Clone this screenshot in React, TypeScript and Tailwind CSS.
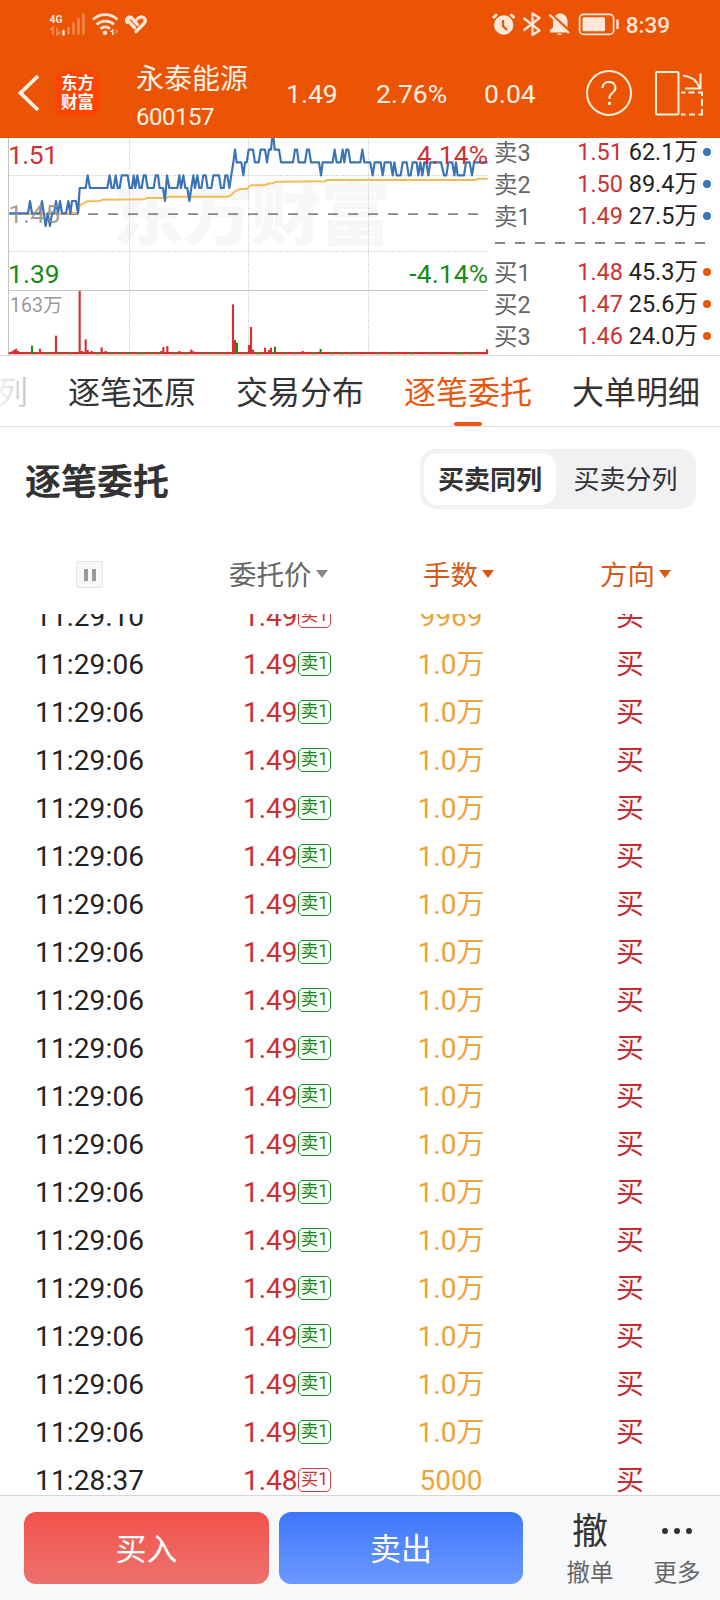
import React from "react";

const LEVELS: Record<string, number> = {
  "-1": 273, "0": 235, "1": 198, "2": 159, "3": 121, "4": 82, "5": 44, "6": 12,
};

// Alternating x position and price level of the intraday line.
const PRICE = [
  28, 0, 84, 0, 90, 1, 96, 0, 120, 0, 126, 1, 137, -1, 143, 0, 150, -1, 156, 0, 162, 0, 168, 1, 174, 0, 180, 1, 186, 0, 198, 0,
  205, 1, 211, 0, 216, 1, 228, 1, 234, 0, 239, 2, 257, 2, 263, 3, 270, 2, 322, 2, 329, 3, 335, 2, 341, 2, 347, 3, 353, 2, 359, 2,
  365, 3, 383, 3, 389, 2, 396, 2, 401, 3, 406, 2, 412, 3, 419, 2, 425, 2, 431, 3, 437, 3, 443, 2, 461, 2, 467, 3, 474, 3, 479, 2,
  489, 2, 495, 1, 501, 3, 508, 2, 532, 2, 538, 3, 543, 2, 550, 3, 556, 2, 562, 2, 568, 1, 574, 2, 580, 3, 585, 2, 592, 3, 598, 2,
  604, 2, 610, 3, 617, 3, 623, 2, 634, 2, 640, 3, 657, 3, 663, 2, 671, 2, 676, 3, 682, 3, 688, 2, 700, 4, 705, 5, 710, 4, 724, 4,
  730, 3, 735, 4, 740, 4, 746, 5, 759, 5, 765, 4, 776, 4, 782, 5, 795, 5, 801, 4, 807, 5, 813, 5, 816, 6, 821, 6, 824, 5, 837, 5, 843, 4,
  879, 4, 885, 5, 891, 5, 896, 4, 915, 4, 921, 5, 927, 5, 933, 4, 957, 4, 963, 3, 968, 4, 998, 4, 1004, 5, 1010, 4, 1022, 4,
  1028, 5, 1033, 4, 1039, 5, 1045, 5, 1051, 4, 1081, 4, 1087, 5, 1093, 4, 1111, 4, 1118, 3, 1124, 4, 1142, 4, 1148, 3, 1154, 4,
  1172, 4, 1178, 3, 1183, 4, 1190, 3, 1202, 3, 1208, 4, 1220, 4, 1226, 3, 1232, 3, 1238, 4, 1250, 4, 1255, 3, 1261, 4, 1267, 3,
  1273, 4, 1279, 4, 1285, 3, 1291, 4, 1323, 4, 1332, 3, 1339, 3, 1345, 4, 1357, 4, 1363, 3, 1368, 4, 1373, 3, 1392, 3, 1398, 4,
  1409, 4, 1416, 3, 1422, 4, 1463, 4,
];

const AVERAGE =
  "28,237 205,237 210,233 234,233 240,210 250,205 262,199 300,198 305,194 435,193 440,189 500,189 505,185 680,185 692,182 705,168 720,162 740,162 753,151 793,151 803,147 815,145 830,140 975,139 981,135 1427,135 1435,131 1463,131";

const points: string[] = [];
for (let i = 0; i < PRICE.length; i += 2) points.push(`${PRICE[i]},${LEVELS[String(PRICE[i + 1])]}`);

// x, top edge, falling
const VOLUME: [number, number, boolean?][] = [
  [36, 649], [42, 645], [48, 641], [54, 648], [96, 632, true], [120, 641], [168, 602], [239, 468], [246, 648], [257, 613], [263, 645],
  [275, 648], [305, 637], [317, 648], [484, 648], [490, 636], [502, 633], [538, 648], [574, 644], [580, 649], [699, 508], [705, 615],
  [711, 623, true], [747, 630], [753, 576], [759, 644], [795, 638], [807, 645], [813, 638], [825, 635, true], [908, 648],
  [962, 642, true], [1461, 643],
];
const FALLING = [92, 138, 172, 205, 287, 330, 352, 378, 408, 425, 448, 470, 520, 552, 598, 622, 645, 668, 730, 765, 775, 850, 880, 935, 990, 1020, 1050, 1130, 1170, 1230, 1290, 1365, 1372, 1378, 1410];

function IntradayChart() {
  return (
    <svg viewBox="0 9 1470 651" className="block h-[217px] w-[490px] shrink-0" style={{ fontFamily: "Roboto, 'Noto Sans CJK SC', sans-serif" }}>
      <text x="340" y="316" fontSize="212" fontWeight="900" fill="#f7f7f7" fontFamily="'Noto Sans CJK SC', sans-serif" textLength="832">东方财富</text>
      <g stroke="#c4c4c4" strokeWidth="3" fill="none">
        <path d="M25.5 9V660M26 466.5H1463" />
        <path d="M28 121.5H1463M28 349.5H1463M388.5 9V655M745.5 9V655M1105.5 9V655" strokeDasharray="3 4" />
      </g>
      <path d="M84 237.5H1450" stroke="#858585" strokeWidth="5" strokeDasharray="30 30" />
      <polyline points={AVERAGE} fill="none" stroke="#f0bc58" strokeWidth="6" />
      <polyline points={points.join(" ")} fill="none" stroke="#3b74b6" strokeWidth="6.5" strokeLinejoin="round" />
      <path d="M26 654.5H1463" stroke="#d83030" strokeWidth="7" />
      {FALLING.map((x) => (
        <path key={x} d={`M${x} 654.5h10`} stroke="#5f7a20" strokeWidth="6" />
      ))}
      {VOLUME.map(([x, y, down]) => (
        <path key={x} d={`M${x} ${y}V657`} stroke={down ? "#1c8c1c" : "#d83030"} strokeWidth="6.5" />
      ))}
      <text x="24" y="87" fontSize="79" textLength="150" fill="#cb3234">1.51</text>
      <text x="24" y="264" fontSize="79" textLength="156" fill="#8f8f8f" fillOpacity="0.85">1.45</text>
      <text x="24" y="444" fontSize="79" textLength="155" fill="#178a17">1.39</text>
      <text x="30" y="531" fontSize="58" textLength="157" fill="#999">163万</text>
      <text x="1464" y="87" fontSize="79" fill="#cb3234" textAnchor="end" textLength="214">4.14%</text>
      <text x="1464" y="444" fontSize="79" fill="#178a17" textAnchor="end" textLength="236">-4.14%</text>
    </svg>
  );
}

function BookRow({ label, price, amount, sell }: { label: string; price: string; amount: string; sell?: boolean }) {
  return (
    <div className="flex h-8 items-center text-[23.500px] leading-none">
      <span className="w-[60px] text-[#666]">{label}</span>
      <span className="w-[69px] pb-[2px] text-right text-[#cb3234]">{price}</span>
      <span className="w-[75px] pb-[2px] text-right whitespace-nowrap text-[#222]">{amount}</span>
      <span className={`mb-1 ml-[5px] size-[8px] rounded-full ${sell ? "bg-[#3a75bb]" : "bg-[#e0590f]"}`} />
    </div>
  );
}

function StatusBar() {
  return (
    <div className="flex h-12 items-center text-[#fee7d8]">
      <svg className="ml-[48px] h-6 w-[102px]" viewBox="48 12 102 24" fill="none" stroke="currentColor">
        <text x="49.5" y="22.5" fontSize="11.5" fontWeight="700" fill="currentColor" stroke="none" textLength="13" lengthAdjust="spacingAndGlyphs" fontFamily="Roboto, sans-serif">4G</text>
        <path d="M63.5 34.500V31" strokeWidth="2.500" strokeLinecap="round" />
        <g opacity="0.35">
          <path d="M50.500 30l2.500-2.500V35M57 27.500V35l3.500-3.500" strokeWidth="1.800" />
          <path d="M68.500 33.500V28M73.500 33.500V23.500M78.500 33.500V19M83.500 33.500V14.500" strokeWidth="2.600" strokeLinecap="round" />
        </g>
        <path d="M93 19.500c7-6.500 17.500-6.500 24.500 0M96.500 24.500c5.500-4.500 12.500-4.500 17.500 0M100.500 28.800c3-2.300 6.500-2.300 9.500 0" strokeWidth="2.700" />
        <circle cx="105" cy="32.800" r="2.200" fill="currentColor" stroke="none" />
        <path d="M109.500 32l4-3.500V35h-1.500v-3z" fill="currentColor" stroke="none" />
        <path d="M115.500 29v5.500l3-3.500z" fill="currentColor" stroke="none" opacity="0.4" />
        <path d="M125 20.500c0-4 4-6.500 7.500-4.300l-5.300 8.300C126 23.500 125 22 125 20.500z" fill="currentColor" stroke="none" />
        <g strokeWidth="3.300" strokeLinecap="round" strokeLinejoin="round">
          <path d="M131.800 18l5.700 6.500" />
          <path d="M129.800 22.500l4.700 5" />
          <path d="M137 19.200c3-3.500 6.500-2.700 7.700-.500c1 2 .500 3.500-.700 4.800L136 31.500" />
        </g>
      </svg>
      <svg className="ml-auto h-7 w-[132px]" viewBox="488 10 132 28" fill="none" stroke="currentColor">
        <circle cx="502.700" cy="25" r="9.700" fill="currentColor" stroke="none" />
        <path d="M492 18l4-3.800M509.500 14.200l4 3.800" strokeWidth="2.800" />
        <path d="M502 20v6l4 4" stroke="#ea5404" strokeWidth="2.200" />
        <path d="M522.500 18l16 12.500-7 4.500V13.500l7 4.500-16 12.500" strokeWidth="2.300" strokeLinejoin="round" />
        <path d="M549 32.500V30l3-2.500V22c0-5 3-7.500 6-8.500h2c5 1 6.500 4.500 6.500 8.500v5.500l3 3.500v1.500z" fill="currentColor" stroke="none" />
        <path d="M556 33.600h5c-.600 2-4.400 2-5 0z" fill="currentColor" stroke="none" />
        <path d="M548 12.500l23 20.500" stroke="#ea5404" strokeWidth="2.500" />
        <path d="M548.500 14.800l19.500 18.500" strokeWidth="2.200" />
        <rect x="578.600" y="14.400" width="34" height="20" rx="4" strokeWidth="1.700" />
        <rect x="581.500" y="17.300" width="22.500" height="14" rx="1.500" fill="currentColor" stroke="none" />
        <path d="M616.500 19.500v9.500" strokeWidth="2.400" />
      </svg>
      <span className="mt-[2px] mr-[50px] ml-[5px] text-[22.500px] leading-none font-medium">8:39</span>
    </div>
  );
}

function TitleBar() {
  return (
    <div className="flex h-[90px] items-center text-white">
      <svg className="ml-[16px] h-10 w-6" viewBox="0 0 24 40" fill="none" stroke="#fff3e8" strokeWidth="3.800">
        <path d="M22 3L4.500 20L22 37" />
      </svg>
      <div className="ml-[15px] flex size-[45px] flex-col items-center justify-center rounded-[9px] bg-[#ff4500] text-[16.500px] leading-[19px] font-bold">
        <span>东方</span>
        <span>财富</span>
      </div>
      <div className="ml-[36px] w-[112px] pt-[7px] whitespace-nowrap text-[#fff0e2]">
        <div className="text-[28px] leading-[40px]">永泰能源</div>
        <div className="text-[24px] leading-[34px] tracking-[-0.5px]">600157</div>
      </div>
      <span className="ml-[38px] w-[90px] pt-[2px] text-[26.500px] leading-none text-[#fff0e2]">1.49</span>
      <span className="w-[108px] pt-[2px] text-[26.500px] leading-none text-[#fff0e2]">2.76%</span>
      <span className="w-[102px] pt-[2px] text-[26.500px] leading-none text-[#fff0e2]">0.04</span>
      <div className="flex size-[46px] shrink-0 items-center justify-center rounded-full border-2 border-[#fff0dc]">
        <svg className="h-6 w-4" viewBox="0 0 16 24" fill="none" stroke="#fff0dc" strokeWidth="2.200">
          <path d="M1.500 7c0-8 13-8 13 0c0 4.500-6 5-6 9.500V18" />
          <path d="M8.500 21v2.800" strokeWidth="3" />
        </svg>
      </div>
      <svg className="ml-[22px] h-[46px] w-[50px]" viewBox="654 70 50 46" fill="none" stroke="#fff0dc" strokeWidth="2">
        <rect x="656" y="72" width="22.500" height="42.500" rx="1" />
        <path d="M683 75.500c8 1 14 5 16.500 12M700.500 73.500V88.500H685" />
        <path d="M681 92.500h4.500M688.500 92.500h6M698 92.500h4V96M702 99v7M702 109v5.500h-3.500M695 114.500h-6M685.500 114.500h-4.500" />
      </svg>
    </div>
  );
}

function Caret({ className }: { className: string }) {
  return (
    <svg viewBox="0 0 12 8" className={`mb-[5px] ml-1 h-2 w-3 ${className}`}>
      <path d="M0 0H12L6 8Z" fill="currentColor" />
    </svg>
  );
}

type Order = { time: string; price: string; tag: string; sell?: boolean; lots: string };

const ORDERS: Order[] = [
  { time: "11:29:10", price: "1.49", tag: "买1", lots: "9969" },
  ...Array.from({ length: 17 }, () => ({ time: "11:29:06", price: "1.49", tag: "卖1", sell: true, lots: "1.0万" })),
  { time: "11:28:37", price: "1.48", tag: "买1", lots: "5000" },
];

function OrderRow({ order }: { order: Order }) {
  return (
    <div className="flex h-12 shrink-0 items-center text-[28px] leading-none">
      <span className="w-[180px] pt-[2px] pl-[35px] tracking-[0.15px] text-[#222]">{order.time}</span>
      <div className="flex w-[180px] items-center pl-[63px] text-[#cb2f31]">
        <span className="w-[55px] pt-[2px]">{order.price}</span>
        <span
          className={`flex h-6 w-[33px] items-center justify-center rounded-[5px] border pb-px text-[17.500px] leading-none ${
            order.sell ? "border-[#1b8f1b] text-[#178a17]" : "border-[#cb3c3e] text-[#cb3234]"
          }`}
        >
          {order.tag}
        </span>
      </div>
      <span className="w-[180px] pt-[2px] pl-[2px] text-center text-[#e9a43b]">{order.lots}</span>
      <span className="w-[180px] pt-[2px] text-center text-[#c92a2d]">买</span>
    </div>
  );
}

export default function App() {
  return (
    <div className="flex h-[1600px] w-[720px] flex-col overflow-hidden bg-white font-['Roboto','Noto_Sans_CJK_SC',sans-serif]">
      <header className="h-[138px] shrink-0 bg-[#ea5404]">
        <StatusBar />
        <TitleBar />
      </header>

      <section className="flex h-[218px] shrink-0 border-b border-[#dedede]">
        <IntradayChart />
        <div className="w-[225px] pl-1">
          <BookRow label="卖3" price="1.51" amount="62.1万" sell />
          <BookRow label="卖2" price="1.50" amount="89.4万" sell />
          <BookRow label="卖1" price="1.49" amount="27.5万" sell />
          <svg className="block h-6 w-[212px]" viewBox="0 0 212 24">
            <path d="M1 9H212" stroke="#888" strokeWidth="2" strokeDasharray="10 10" />
          </svg>
          <BookRow label="买1" price="1.48" amount="45.3万" />
          <BookRow label="买2" price="1.47" amount="25.6万" />
          <BookRow label="买3" price="1.46" amount="24.0万" />
        </div>
      </section>

      <nav className="flex h-[71px] shrink-0 gap-10 overflow-hidden border-b border-[#e0e0e0] text-[32px] leading-[74px] whitespace-nowrap text-[#333]">
        <span className="-ml-1 w-8 bg-linear-to-r from-[#f8f8f8] to-[#c4c4c4] bg-clip-text text-transparent">列</span>
        <span>逐笔还原</span>
        <span>交易分布</span>
        <div className="flex flex-col items-center text-[#ea5810]">
          <span className="h-[66px]">逐笔委托</span>
          <span className="h-1 w-7 rounded-full bg-[#ea5810]" />
        </div>
        <span>大单明细</span>
      </nav>

      <div className="flex h-[110px] shrink-0 items-center pr-6 pl-[25px]">
        <h1 className="pt-[2px] text-[36px] leading-none font-bold text-[#333]">逐笔委托</h1>
        <div className="mb-[6px] ml-auto flex h-[60px] w-[276px] rounded-[16px] bg-[#f1f1f4] p-1 text-[26px] leading-[54px] text-[#333]">
          <span className="w-[132px] rounded-[14px] bg-white text-center font-bold">买卖同列</span>
          <span className="flex-1 pl-[3px] text-center">买卖分列</span>
        </div>
      </div>

      <div className="flex h-[77px] shrink-0 items-center pt-[1px] text-[27.500px] leading-none whitespace-nowrap">
        <div className="w-[229px] pb-[3px] pl-[76px]">
          <div className="flex size-[27px] items-center justify-center gap-[4px] rounded-[3px] border border-[#e1e3e8] bg-[#f6f7f9]">
            <span className="h-3 w-[4px] bg-[#999]" />
            <span className="h-3 w-[4px] bg-[#999]" />
          </div>
        </div>
        <div className="flex w-[194px] items-center text-[#666]">委托价<Caret className="text-[#888]" /></div>
        <div className="flex w-[177px] items-center text-[#d55a18]">手数<Caret className="text-[#dc5510]" /></div>
        <div className="flex items-center text-[#d55a18]">方向<Caret className="text-[#dc5510]" /></div>
      </div>

      <main className="flex min-h-0 flex-1 flex-col overflow-hidden">
        <div className="-mt-[22px] flex flex-col">
          {ORDERS.map((order, i) => (
            <OrderRow key={i} order={order} />
          ))}
        </div>
      </main>

      <footer className="flex h-[105px] shrink-0 border-t border-[#d4d6da] bg-[#f7f8fa] pt-4 pl-6">
        <button className="h-[72px] w-[245px] rounded-[12px] bg-linear-to-b from-[#f4514b] to-[#eb716c] pt-[2px] text-[31px] leading-none text-white">买入</button>
        <button className="ml-[10px] h-[72px] w-[244px] rounded-[12px] bg-linear-to-b from-[#3d76fa] to-[#6b99ff] pt-[2px] text-[31px] leading-none text-white">卖出</button>
        <div className="ml-[31px] flex w-[72px] flex-col items-center pt-[2px] text-[#333]">
          <span className="text-[36px] leading-[36px]">撤</span>
          <span className="mt-[11px] text-[23.500px] leading-[24px] text-[#666]">撤单</span>
        </div>
        <div className="ml-[15px] flex w-[72px] flex-col items-center pt-[2px] text-[#333]">
          <span className="flex h-9 items-center gap-[6px] pb-[3px]">
            <span className="size-[6px] rounded-full bg-[#333]" />
            <span className="size-[6px] rounded-full bg-[#333]" />
            <span className="size-[6px] rounded-full bg-[#333]" />
          </span>
          <span className="mt-[11px] text-[23.500px] leading-[24px] text-[#666]">更多</span>
        </div>
      </footer>
    </div>
  );
}
